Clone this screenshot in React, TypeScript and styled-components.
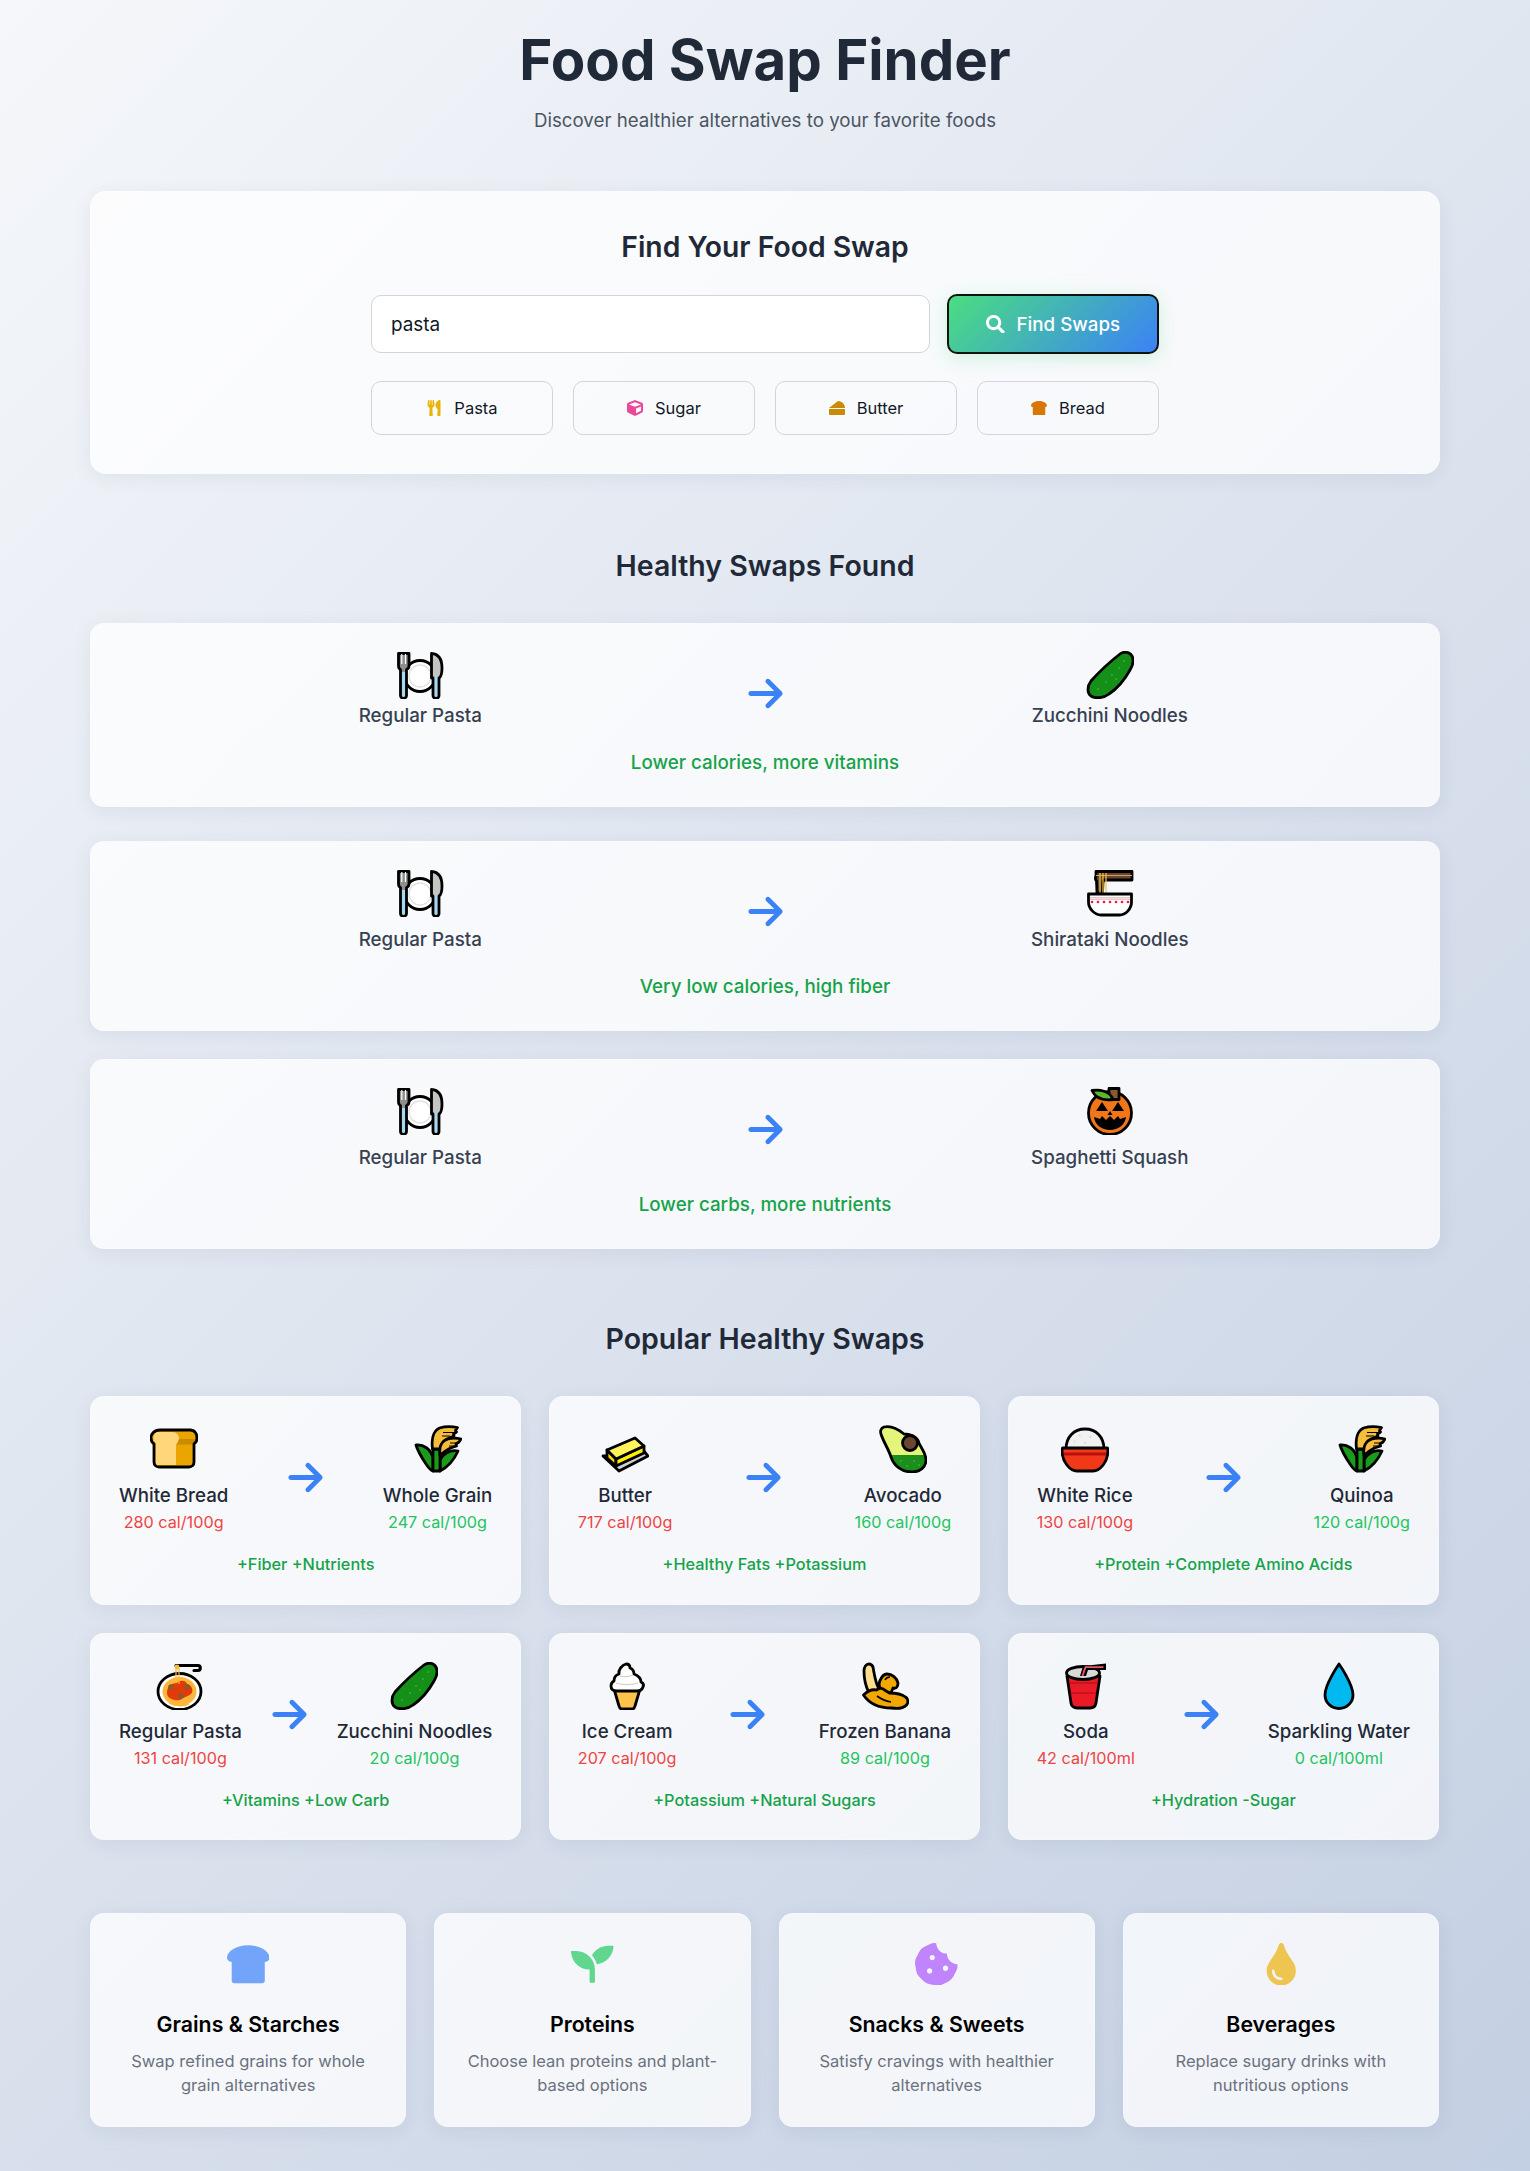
import React from "react";
import styled, { createGlobalStyle, css } from "styled-components";
import { FaUtensils, FaCube, FaCheese, FaBreadSlice, FaSeedling, FaCookieBite, FaTint, FaSearch } from "react-icons/fa";
import { FaArrowRight } from "react-icons/fa6";

const Global = createGlobalStyle`
  * { box-sizing: border-box; }
  html, body { margin: 0; padding: 0; }
  body {
    font-family: "Inter", "Liberation Sans", sans-serif;
    background: linear-gradient(135deg, #f5f7fa 0%, #c3cfe2 100%);
    min-height: 2171px;
    color: #1f2937;
  }
`;

const glass = css`
  background: rgba(255, 255, 255, 0.75);
  border: 1px solid rgba(255, 255, 255, 0.2);
  box-shadow: 0 4px 20px rgba(30, 40, 80, 0.07);
`;

const Page = styled.div`
  padding: 20px 90px 44px;
`;
const Header = styled.header`
  text-align: center;
  margin-bottom: 56px;
`;
const Title = styled.h1`
  margin: 0 0 7px;
  font-size: 56.4px;
  line-height: 80px;
  font-weight: 700;
  color: #1f2937;
`;
const Subtitle = styled.p`
  margin: 0;
  font-size: 18.7px;
  line-height: 28px;
  color: #4b5563;
`;
const SearchCard = styled.section`
  ${glass}
  border-radius: 16px;
  padding: 38px 32px;
  margin-bottom: 75px;
  display: flex;
  flex-direction: column;
  align-items: center;
`;
const SearchTitle = styled.h2`
  margin: 0 0 30px;
  font-size: 28.3px;
  line-height: 34px;
  font-weight: 600;
  color: #1f2937;
`;
const SearchRow = styled.div`
  width: 788px;
  display: flex;
  gap: 17px;
  align-items: center;
`;
const Input = styled.input`
  flex: 1;
  min-width: 0;
  height: 58px;
  border: 1px solid #d1d5db;
  border-radius: 10px;
  background: #fff;
  padding: 0 19px;
  font: 400 18.9px "Inter", sans-serif;
  color: #111827;
  outline: none;
`;
const FindButton = styled.button`
  flex: none;
  width: 212px;
  height: 60px;
  border: 2px solid #111;
  border-radius: 10px;
  background: linear-gradient(135deg, #4ade80, #3b82f6);
  color: #fff;
  font: 500 18.75px "Inter", sans-serif;
  display: flex;
  align-items: center;
  justify-content: center;
  gap: 12px;
  box-shadow: 0 4px 18px rgba(74, 222, 128, 0.25);
`;
const QuickGrid = styled.div`
  width: 788px;
  margin-top: 27px;
  display: grid;
  grid-template-columns: repeat(4, 1fr);
  gap: 20px;
`;
const QuickButton = styled.button`
  height: 54px;
  border: 1px solid #d1d5db;
  border-radius: 10px;
  background: transparent;
  color: #111827;
  font: 400 16.5px "Inter", sans-serif;
  display: flex;
  align-items: center;
  justify-content: center;
  gap: 12px;
`;
const QuickIcon = styled.span<{ $c: string }>`
  display: flex;
  color: ${(p) => p.$c};
  font-size: 16px;
`;
const SectionTitle = styled.h2`
  margin: 0 0 40px;
  text-align: center;
  font-size: 28.5px;
  line-height: 34px;
  font-weight: 600;
  color: #1f2937;
`;
const ResultList = styled.div`
  display: flex;
  flex-direction: column;
  margin-bottom: 73px;
`;
const ResultCard = styled.div<{ $gap: number }>`
  ${glass}
  border-radius: 14px;
  padding: 23px 29px 29px;
  margin-bottom: ${(p) => p.$gap}px;
`;
const ResultRow = styled.div`
  display: grid;
  grid-template-columns: 1fr auto 1fr;
  gap: 25px;
  align-items: start;
`;
const Item = styled.div`
  display: flex;
  flex-direction: column;
  align-items: center;
`;
const EmojiBox = styled.div<{ $h: number; $top: number }>`
  height: ${(p) => p.$h}px;
  padding-top: ${(p) => p.$top}px;
  display: flex;
  justify-content: center;
  svg {
    display: block;
    width: 48px;
    height: 48px;
  }
`;
const ItemName = styled.div`
  font-size: 18.75px;
  line-height: 28px;
  font-weight: 500;
  color: #374151;
`;
const Arrow = styled.div`
  color: #3b82f6;
  font-size: 39px;
  display: flex;
  margin-top: 27px;
`;
const PopArrow = styled(Arrow)`
  margin-top: 38px;
`;
const Benefit = styled.div`
  text-align: center;
  margin-top: 19px;
  color: #16a34a;
  font-weight: 500;
  font-size: 18.8px;
  line-height: 28px;
`;
const PopularGrid = styled.div`
  display: grid;
  grid-template-columns: repeat(3, 1fr);
  grid-template-rows: 209px 207px;
  gap: 27.5px;
  margin-bottom: 73px;
  padding-right: 1px;
`;
const PopularCard = styled.div`
  ${glass}
  border-radius: 14px;
  padding: 23px 28px;
`;
const PopularRow = styled.div`
  display: flex;
  justify-content: space-between;
  align-items: flex-start;
`;
const PopName = styled.div`
  font-size: 18.7px;
  line-height: 26px;
  font-weight: 500;
  color: #1f2937;
`;
const Calories = styled.div<{ $good?: boolean }>`
  font-size: 16.2px;
  line-height: 22px;
  margin-top: 2px;
  color: ${(p) => (p.$good ? "#22c55e" : "#ef4444")};
`;
const PopBenefit = styled.div`
  text-align: center;
  margin-top: 18px;
  color: #16a34a;
  font-weight: 500;
  font-size: 16.3px;
  line-height: 26px;
`;
const CategoryGrid = styled.div`
  display: grid;
  grid-template-columns: repeat(4, 1fr);
  gap: 28px;
  padding-right: 1px;
`;
const CategoryCard = styled.div`
  ${glass}
  border-radius: 14px;
  padding: 29px 24px;
  text-align: center;
`;
const CategoryIcon = styled.div<{ $c: string }>`
  color: ${(p) => p.$c};
  font-size: 42.5px;
  display: flex;
  justify-content: center;
  margin-bottom: 24px;
`;
const CategoryTitle = styled.h3`
  margin: 0 0 11px;
  font-size: 21.3px;
  line-height: 30px;
  font-weight: 600;
  color: #000;
`;
const CategoryText = styled.p`
  margin: 0;
  font-size: 16.5px;
  line-height: 23.5px;
  color: #6b7280;
`;

const K = "#000";
const S = { stroke: K, strokeWidth: 2.8, strokeLinejoin: "round" as const, strokeLinecap: "round" as const };

const Plate = () => (
  <svg viewBox="0 0 48 48">
    <defs>
      <linearGradient id="fork" x1="0" y1="0" x2="0" y2="1">
        <stop offset="0.42" stopColor="#8f8f8e" />
        <stop offset="0.42" stopColor="#a8d8f0" />
      </linearGradient>
      <linearGradient id="knife" x1="0" y1="0" x2="0" y2="1">
        <stop offset="0.52" stopColor="#c4c4c3" />
        <stop offset="0.52" stopColor="#a8d8f0" />
      </linearGradient>
    </defs>
    <circle cx="24" cy="25" r="15.500" fill="#fff" {...S} />
    <circle cx="24" cy="25" r="11" fill="#fff" stroke="#e2e2e2" strokeWidth="1.400" />
    <path d="M2.500 2.500h10.500v12c0 2-1 3.500-2.500 4v26a3 3 0 0 1-6 0v-26c-1.500-.5-2-2-2-4z" fill="url(#fork)" {...S} />
    <path d="M5.800 3v10M9.500 3v10" stroke="#fff" strokeWidth="1.200" />
    <path d="M35.500 2.500c7 .5 10.500 6 10.500 14.500 0 5-1 9-3 10v17.500a3 3 0 0 1-6 0V27h-1.500z" fill="url(#knife)" {...S} />
  </svg>
);
const Cucumber = () => (
  <svg viewBox="0 0 48 48">
    <path d="M34 3c4-3 10-2 12 2 2 4 1 9-2 14-5 9-12 18-21 24-5 4-13 5-18 2-4-3-4-10 0-15 8-9 20-20 29-27z" fill="#149018" {...S} />
    <g fill="#5cc04a">
      <circle cx="38" cy="10" r=".8" /><circle cx="33" cy="17" r=".8" /><circle cx="26" cy="24" r=".8" />
      <circle cx="20" cy="31" r=".8" /><circle cx="12" cy="38" r=".8" /><circle cx="30" cy="28" r=".8" />
    </g>
  </svg>
);
const Noodles = () => (
  <svg viewBox="0 0 48 48">
    <path d="M10 2.500h36v8.500H18l-1 2-.5 11H11l-.5-12c-1-1-1.500-3-.5-5z" fill="#6a462f" {...S} />
    <path d="M10 6.500h36" stroke="#c9a36a" strokeWidth="1.200" />
    <path d="M14 4v20M17 4v20M20 4v20" stroke="#f5c542" strokeWidth="1.200" />
    <path d="M2.500 25h43v8c0 7-6 13-12 13H15C9 46 2.500 40 2.500 33z" fill="#fff" {...S} />
    <path d="M4 28.500h40" stroke="#d0cfce" strokeWidth="1" />
    <path d="M4 29.500h40v1.500H4z" fill="#ef5a6a" opacity=".4" />
    <g fill="#ea1a3a">
      <circle cx="6" cy="33" r="1.300" /><circle cx="12" cy="33" r="1.300" /><circle cx="18" cy="33" r="1.300" />
      <circle cx="24" cy="33" r="1.300" /><circle cx="30" cy="33" r="1.300" /><circle cx="36" cy="33" r="1.300" />
      <circle cx="42" cy="33" r="1.300" />
    </g>
  </svg>
);
const Pumpkin = () => (
  <svg viewBox="0 0 48 48">
    <circle cx="24" cy="26" r="21.500" fill="#f1761a" {...S} />
    <path d="M23 1.500h10v11H23z" fill="#8a5a2f" {...S} />
    <path d="M6 3.500c7-1 18 0 21 9-8 1-17 0-21-9z" fill="#5cb82a" {...S} />
    <path d="M16 15l6 9H10zM32 15l6 9H26z" fill={K} />
    <path d="M24 24l2.500 4h-5z" fill={K} />
    <path d="M8 30l6 2 2-3 4 4 4-4 4 4 4-4 2 3 6-2c-1 8-8 13-16 13S9 38 8 30z" fill={K} />
  </svg>
);
const Bread = () => (
  <svg viewBox="0 0 48 48">
    <path d="M10 5h30c5 0 7 4 7 8 0 3-1.500 5-3 6v18c0 3-2 5-5 5H9c-3 0-5-2-5-5V19c-1.500-1-3-3-3-6 0-4 3-8 9-8z" fill="#eaa500" />
    <path d="M8 7h14c5 0 7 3 7 7 0 2-1 4-3 5v21H8c-1.500 0-2.500-1-2.500-3V18C4 17 3.500 15 3.500 13c0-3 2-6 4.500-6z" fill="#ffd67a" />
    <path d="M29 14h17v4l-2 1.500H27z" fill="#c98c00" />
    <path d="M10 5h30c5 0 7 4 7 8 0 3-1.500 5-3 6v18c0 3-2 5-5 5H9c-3 0-5-2-5-5V19c-1.500-1-3-3-3-6 0-4 3-8 9-8z" fill="none" {...S} />
  </svg>
);
const Grain = () => (
  <svg viewBox="0 0 48 48">
    <path d="M2 20c7-1 15 4 17 13v13c-3-1-5-4-7-7-4-6-8-12-10-19z" fill="#1c9a1c" {...S} />
    <path d="M44 26c-8-2-15 3-18 9v11c8-4 14-11 18-20z" fill="#1c9a1c" {...S} />
    <path d="M19 46V24h7v22z" fill="#1c9a1c" {...S} />
    <path d="M18.500 24c-1-8 0-18 7-21 5-1.500 13-1.500 18-.5l-2 3 1 1.500-3 2 .5 2-7 3c-4 2-6 5-7 10z" fill="#f5bd3c" {...S} />
    <path d="M26 30c-1-7 1-14 8-16 4-1 9-1 13 0l-2 3-3 2 .5 2-6 2c-4 2-7 4-10 7z" fill="#f5bd3c" {...S} />
    <path d="M29 7.500h11M28 11h8M36 18h8M35 21h6" stroke={K} strokeWidth="1" />
  </svg>
);
const Butter = () => (
  <svg viewBox="0 0 48 48">
    <path d="M2 31l16 15 29-15-5-6-27 8-7-2z" fill="#d0cfce" {...S} />
    <path d="M6 25l9 9v7l-9-8z" fill="#ffd800" {...S} />
    <path d="M15 34l28-13v7l-28 13z" fill="#fff000" {...S} />
    <path d="M6 25l28-12 9 8-28 13z" fill="#fff25a" {...S} />
  </svg>
);
const Avocado = () => (
  <svg viewBox="0 0 48 48">
    <defs>
      <linearGradient id="avo" x1="0" y1="0" x2="0" y2="1">
        <stop offset="0.62" stopColor="#e4f57a" />
        <stop offset="0.62" stopColor="#1c8e1c" />
      </linearGradient>
    </defs>
    <path d="M5 2c6-1.500 14 2 20 7 5 0 13 2 15 9 2 5 7 10 7 17 0 7-6 12-14 12-10 0-18-6-21-15C10 25 4 16 2 9c-1-3 0-6 3-7z" fill="url(#avo)" {...S} />
    <circle cx="31" cy="18" r="7.500" fill="#6a462f" {...S} />
    <g fill="#5cc04a">
      <circle cx="22" cy="36" r=".8" /><circle cx="28" cy="41" r=".8" /><circle cx="35" cy="36" r=".8" /><circle cx="40" cy="40" r=".8" />
    </g>
  </svg>
);
const Rice = () => (
  <svg viewBox="0 0 48 48">
    <path d="M5 24C5 12 13 4 24 4s19 8 19 20z" fill="#f1f1f1" {...S} />
    <path d="M18 10l1.500 1.500M30 11l-1.500 2M25 17l-2 1.500M14 16l-1 1" stroke="#c9c9c9" strokeWidth="1" />
    <path d="M2 23h44c1 0 1 1 1 2 0 12-8 21-15 21H16C9 46 1 37 1 25c0-1 0-2 1-2z" fill="#f1391a" />
    <path d="M2.500 29h43" stroke="#b81010" strokeWidth="3" />
    <path d="M2 23h44c1 0 1 1 1 2 0 12-8 21-15 21H16C9 46 1 37 1 25c0-1 0-2 1-2z" fill="none" {...S} />
  </svg>
);
const Spaghetti = () => (
  <svg viewBox="0 0 48 48">
    <ellipse cx="23.500" cy="29.500" rx="21.500" ry="18" fill="#fff" {...S} />
    <ellipse cx="23.500" cy="29.500" rx="17" ry="14.500" fill="#fcb73a" />
    <path d="M11 31c0-7 5-10 10-10 2-3 9-3 10 1 5 1 7 7 4 10-4 3-7 3-11 6-5 1-13-1-13-7z" fill="#e23a08" />
    <circle cx="15" cy="25" r="2.800" fill="#8a5a2f" />
    <circle cx="31" cy="25" r="2.800" fill="#8a5a2f" />
    <circle cx="25" cy="34" r="2.800" fill="#8a5a2f" />
    <path d="M20 6v15M23 6v16M13 41c5 3 14 4 20 1" stroke="#fcb73a" strokeWidth="1.200" fill="none" />
    <path d="M20 3.500h22c3 0 3 5 0 5h-4" fill="none" stroke={K} strokeWidth="3.200" strokeLinecap="round" />
    <circle cx="21" cy="5" r="2.400" fill="#fcb73a" />
  </svg>
);
const IceCream = () => (
  <svg viewBox="0 0 48 48">
    <path d="M11 27l5 17c.5 2 2 3 3 3h10c1 0 2.500-1 3-3l5-17z" fill="#ffc24a" {...S} />
    <path d="M23 2c3 0 4 2 4 4 3 1 4 3 4 6 5 2 7 5 7 8 2 1 3 3 2 5-1 3-3 4-6 4H14c-3 0-6-1-6-5 0-2 1-4 3-5 0-3 2-6 5-7-1-4 3-9 7-10z" fill="#fff" {...S} />
    <path d="M13 21c7 2 15 2 22 0" stroke="#d0cfce" strokeWidth="1.200" fill="none" />
    <path d="M16 14c5 1 10 1 14-1" stroke="#d0cfce" strokeWidth="1.200" fill="none" />
  </svg>
);
const Banana = () => (
  <svg viewBox="0 0 48 48">
    <path d="M18 22c1-5 4-10 8-10 5 0 10 4 11 9 0 4-2 6-5 5l-2 5-10 0z" fill="#f1a800" {...S} />
    <path d="M8 2C5 2 3 5 3 9c0 8 2 16 5 22l10-4C14 20 13 10 12 5c-1-2-2-3-4-3z" fill="#ffdf8e" {...S} />
    <path d="M2.500 33c4-4 8-6 13-5 3-2 6-2 8 0l5 3c5 0 12 1 16 4 3 2 3 6 1 8-3 3-9 4-15 3-11 0-22-4-28-13z" fill="#f1a800" {...S} />
    <path d="M24 18c1-2 3-3 5-3M16 34c4 3 8 5 14 6" stroke={K} strokeWidth="1.600" fill="none" />
  </svg>
);
const Cup = () => (
  <svg viewBox="0 0 48 48">
    <path d="M5 14l4 27c.3 3 3 5 6 5h13c3 0 5.500-2 6-5l4-27z" fill="#ea1a27" {...S} />
    <path d="M8.500 31h25.500M7 21h29" stroke="#a80f1a" strokeWidth="1.200" />
    <ellipse cx="21" cy="11" rx="16.500" ry="6.500" fill="#d8d8d8" {...S} />
    <path d="M18 14l3-10 23-2.500v6.500H26l-2 6z" fill={K} />
    <path d="M20.500 14l3-8.800h18" stroke="#ea5a66" strokeWidth="1.800" fill="none" />
  </svg>
);
const Drop = () => (
  <svg viewBox="0 0 48 48">
    <path d="M24 2C24 2 10 22 10 33a14 13.500 0 0 0 28 0C38 22 24 2 24 2z" fill="#00b9f1" {...S} />
  </svg>
);

const glyphs: Record<string, React.ReactNode> = {
  plate: <Plate />, cucumber: <Cucumber />, noodles: <Noodles />, pumpkin: <Pumpkin />,
  bread: <Bread />, grain: <Grain />, butter: <Butter />, avocado: <Avocado />, rice: <Rice />,
  spaghetti: <Spaghetti />, icecream: <IceCream />, banana: <Banana />, cup: <Cup />, drop: <Drop />,
};

const results = [
  { r: "cucumber", n: "Zucchini Noodles", b: "Lower calories, more vitamins", h: 55, gap: 34 },
  { r: "noodles", n: "Shirataki Noodles", b: "Very low calories, high fiber", h: 61, gap: 28 },
  { r: "pumpkin", n: "Spaghetti Squash", b: "Lower carbs, more nutrients", h: 61, gap: 0 },
];
const popular = [
  ["bread", "White Bread", "280 cal/100g", "grain", "Whole Grain", "247 cal/100g", "+Fiber +Nutrients"],
  ["butter", "Butter", "717 cal/100g", "avocado", "Avocado", "160 cal/100g", "+Healthy Fats +Potassium"],
  ["rice", "White Rice", "130 cal/100g", "grain", "Quinoa", "120 cal/100g", "+Protein +Complete Amino Acids"],
  ["spaghetti", "Regular Pasta", "131 cal/100g", "cucumber", "Zucchini Noodles", "20 cal/100g", "+Vitamins +Low Carb"],
  ["icecream", "Ice Cream", "207 cal/100g", "banana", "Frozen Banana", "89 cal/100g", "+Potassium +Natural Sugars"],
  ["cup", "Soda", "42 cal/100ml", "drop", "Sparkling Water", "0 cal/100ml", "+Hydration -Sugar"],
];
const quick = [
  { icon: <FaUtensils />, c: "#eab308", t: "Pasta" },
  { icon: <FaCube />, c: "#ec4899", t: "Sugar" },
  { icon: <FaCheese />, c: "#ca8a04", t: "Butter" },
  { icon: <FaBreadSlice />, c: "#d97706", t: "Bread" },
];
const categories = [
  { icon: <FaBreadSlice />, c: "#72a5fa", t: "Grains & Starches", d: "Swap refined grains for whole grain alternatives" },
  { icon: <FaSeedling />, c: "#60d68e", t: "Proteins", d: "Choose lean proteins and plant-based options" },
  { icon: <FaCookieBite />, c: "#c084fc", t: "Snacks & Sweets", d: "Satisfy cravings with healthier alternatives" },
  { icon: <FaTint />, c: "#eec550", t: "Beverages", d: "Replace sugary drinks with nutritious options" },
];

export default function App() {
  return (
    <Page>
      <Global />
      <Header>
        <Title>Food Swap Finder</Title>
        <Subtitle>Discover healthier alternatives to your favorite foods</Subtitle>
      </Header>
      <SearchCard>
        <SearchTitle>Find Your Food Swap</SearchTitle>
        <SearchRow>
          <Input defaultValue="pasta" />
          <FindButton><FaSearch /> Find Swaps</FindButton>
        </SearchRow>
        <QuickGrid>
          {quick.map((q) => (
            <QuickButton key={q.t}>
              <QuickIcon $c={q.c}>{q.icon}</QuickIcon>
              {q.t}
            </QuickButton>
          ))}
        </QuickGrid>
      </SearchCard>
      <SectionTitle>Healthy Swaps Found</SectionTitle>
      <ResultList>
        {results.map((r) => (
          <ResultCard key={r.n} $gap={r.gap}>
            <ResultRow>
              <Item><EmojiBox $h={r.h} $top={4}>{glyphs.plate}</EmojiBox><ItemName>Regular Pasta</ItemName></Item>
              <Arrow><FaArrowRight /></Arrow>
              <Item><EmojiBox $h={r.h} $top={4}>{glyphs[r.r]}</EmojiBox><ItemName>{r.n}</ItemName></Item>
            </ResultRow>
            <Benefit>{r.b}</Benefit>
          </ResultCard>
        ))}
      </ResultList>
      <SectionTitle>Popular Healthy Swaps</SectionTitle>
      <PopularGrid>
        {popular.map((p, i) => (
          <PopularCard key={p[1] + p[4]}>
            <PopularRow>
              <Item><EmojiBox $h={i < 3 ? 63 : 62} $top={5}>{glyphs[p[0]]}</EmojiBox><PopName>{p[1]}</PopName><Calories>{p[2]}</Calories></Item>
              <PopArrow><FaArrowRight /></PopArrow>
              <Item><EmojiBox $h={i < 3 ? 63 : 62} $top={5}>{glyphs[p[3]]}</EmojiBox><PopName>{p[4]}</PopName><Calories $good>{p[5]}</Calories></Item>
            </PopularRow>
            <PopBenefit>{p[6]}</PopBenefit>
          </PopularCard>
        ))}
      </PopularGrid>
      <CategoryGrid>
        {categories.map((c) => (
          <CategoryCard key={c.t}>
            <CategoryIcon $c={c.c}>{c.icon}</CategoryIcon>
            <CategoryTitle>{c.t}</CategoryTitle>
            <CategoryText>{c.d}</CategoryText>
          </CategoryCard>
        ))}
      </CategoryGrid>
    </Page>
  );
}
